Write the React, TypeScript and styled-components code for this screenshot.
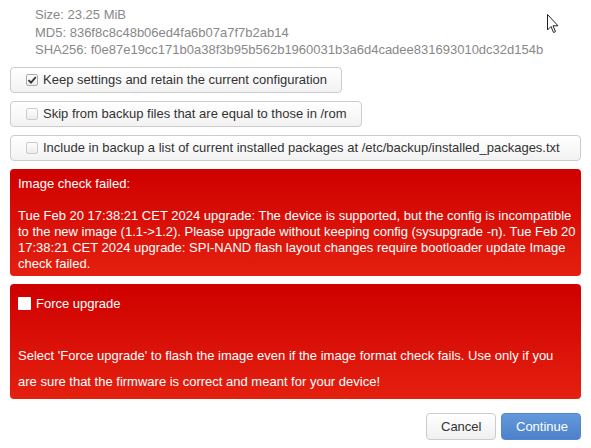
import React from "react";
import styled, { createGlobalStyle } from "styled-components";

const Global = createGlobalStyle`
  html, body { margin: 0; padding: 0; background: #fff; }
  body { font-family: "Liberation Sans", Arial, sans-serif; font-size: 13px; color: #333; }
  * { box-sizing: border-box; }
`;

const Page = styled.div`
  position: relative;
  width: 591px;
  height: 448px;
  padding: 6px 10px 0 10px;
  display: flex;
  flex-direction: column;
`;

const Info = styled.ul`
  list-style: none;
  margin: 0 0 8px 0;
  padding: 0 0 0 25px;
  color: #888;
  line-height: 17.5px;
`;

const Options = styled.div`
  display: flex;
  flex-direction: column;
  align-items: flex-start;
  gap: 8px;
`;

const OptionBtn = styled.label<{ $full?: boolean }>`
  display: flex;
  align-items: center;
  gap: 5px;
  height: 26px;
  padding: 0 14px 0 15px;
  border: 1px solid #ccc;
  border-radius: 4px;
  background: linear-gradient(#ffffff, #f2f2f2);
  color: #333;
  align-self: ${(p) => (p.$full ? "stretch" : "flex-start")};
`;

const Box = styled.span<{ $checked?: boolean }>`
  position: relative;
  display: inline-block;
  width: 12px;
  height: 12px;
  border: 1px solid ${(p) => (p.$checked ? "#aaa" : "#ccc")};
  border-radius: 2px;
  background: linear-gradient(#fdfdfd, #ececec);
  flex: none;
`;

const Alert = styled.div<{ $lh: number; $pb: number; $pr: number }>`
  margin-top: 8px;
  padding: 7px ${(p) => p.$pr}px ${(p) => p.$pb}px 8px;
  border-radius: 4px;
  background: linear-gradient(#cf0000, #e4200f);
  color: #fff;
  line-height: ${(p) => p.$lh}px;
`;

const P = styled.div``;

const ForceRow = styled.label`
  display: flex;
  align-items: center;
  gap: 5px;
`;

const WhiteBox = styled.span`
  display: inline-block;
  width: 13px;
  height: 13px;
  background: #fff;
  border-radius: 1px;
`;

const Actions = styled.div`
  display: flex;
  justify-content: flex-end;
  gap: 5px;
  margin-top: 14px;
`;

const Btn = styled.button<{ $primary?: boolean }>`
  height: 27px;
  padding: 0 14px;
  font-family: "Liberation Sans", Arial, sans-serif;
  font-size: 13px;
  border-radius: 4px;
  border: 1px solid ${(p) => (p.$primary ? "#5487c9" : "#ccc")};
  background: ${(p) =>
    p.$primary ? "linear-gradient(#6398dc, #4d82cb)" : "linear-gradient(#ffffff, #f0f0f0)"};
  color: ${(p) => (p.$primary ? "#fff" : "#333")};
`;

const CancelBtn = styled(Btn)`
  width: 70px;
`;

const ContinueBtn = styled(Btn)`
  width: 80px;
`;

const Cursor = styled.svg`
  position: absolute;
  left: 547px;
  top: 14px;
`;

const Check = () => (
  <svg width="12" height="12" viewBox="0 0 12 12" style={{ position: "absolute", left: -1, top: -1 }}>
    <path d="M2.5 6.2 L5 8.7 L9.8 3" fill="none" stroke="#333" strokeWidth="1.8" />
  </svg>
);

export default function App() {
  return (
    <>
      <Global />
      <Page>
        <Info>
          <li>Size: 23.25 MiB</li>
          <li>MD5: 836f8c8c48b06ed4fa6b07a7f7b2ab14</li>
          <li>SHA256: f0e87e19cc171b0a38f3b95b562b1960031b3a6d4cadee831693010dc32d154b</li>
        </Info>
        <Options>
          <OptionBtn>
            <Box $checked>
              <Check />
            </Box>
            Keep settings and retain the current configuration
          </OptionBtn>
          <OptionBtn>
            <Box />
            Skip from backup files that are equal to those in /rom
          </OptionBtn>
          <OptionBtn $full>
            <Box />
            Include in backup a list of current installed packages at /etc/backup/installed_packages.txt
          </OptionBtn>
        </Options>
        <Alert $lh={16} $pb={4} $pr={3}>
          <P>Image check failed:</P>
          <br />
          <P>
            Tue Feb 20 17:38:21 CET 2024 upgrade: The device is supported, but the config is incompatible
            to the new image (1.1-&gt;1.2). Please upgrade without keeping config (sysupgrade -n). Tue Feb 20
            17:38:21 CET 2024 upgrade: SPI-NAND flash layout changes require bootloader update Image
            check failed.
          </P>
        </Alert>
        <Alert $lh={26} $pb={4} $pr={10}>
          <ForceRow>
            <WhiteBox />
            Force upgrade
          </ForceRow>
          <br />
          <P>
            Select 'Force upgrade' to flash the image even if the image format check fails. Use only if you
            are sure that the firmware is correct and meant for your device!
          </P>
        </Alert>
        <Actions>
          <CancelBtn>Cancel</CancelBtn>
          <ContinueBtn $primary>Continue</ContinueBtn>
        </Actions>
        <Cursor width="12" height="20" viewBox="0 0 12 20">
          <path d="M0.5 0.5 L0.5 16 L4 12.5 L6.5 18.5 L8.5 17.6 L6 11.8 L11 11.8 Z" fill="#fff" stroke="#222" strokeWidth="1" />
        </Cursor>
      </Page>
    </>
  );
}
